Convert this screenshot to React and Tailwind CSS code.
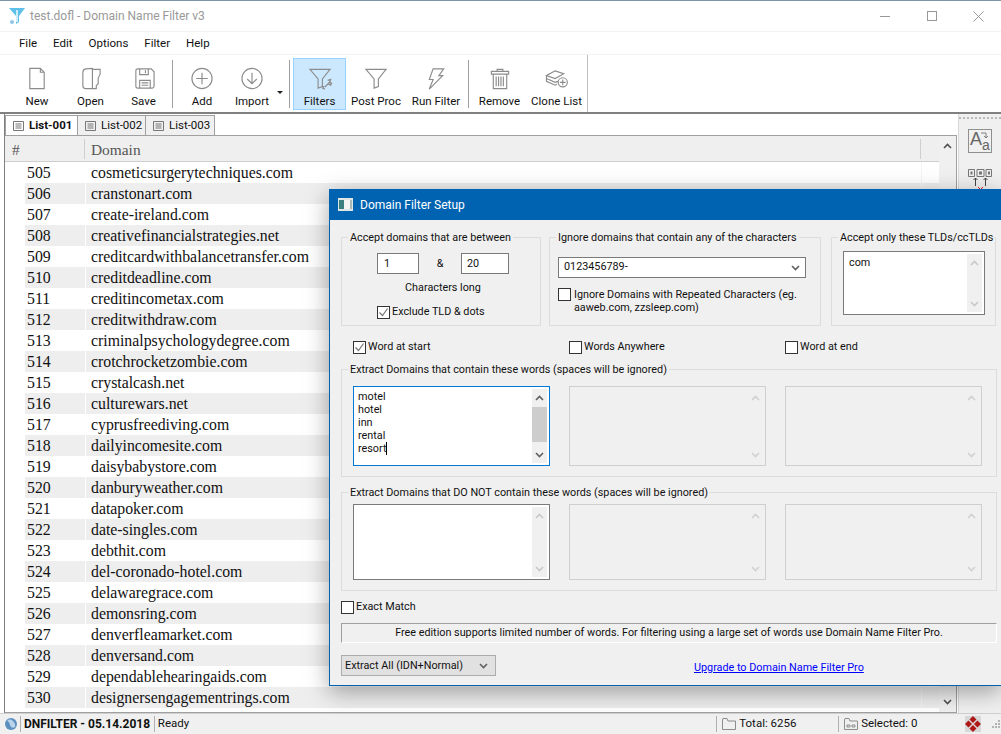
import React from "react";

const domains = [
  "cosmeticsurgerytechniques.com", "cranstonart.com", "create-ireland.com", "creativefinancialstrategies.net",
  "creditcardwithbalancetransfer.com", "creditdeadline.com", "creditincometax.com", "creditwithdraw.com",
  "criminalpsychologydegree.com", "crotchrocketzombie.com", "crystalcash.net", "culturewars.net",
  "cyprusfreediving.com", "dailyincomesite.com", "daisybabystore.com", "danburyweather.com", "datapoker.com",
  "date-singles.com", "debthit.com", "del-coronado-hotel.com", "delawaregrace.com", "demonsring.com",
  "denverfleamarket.com", "denversand.com", "dependablehearingaids.com", "designersengagementrings.com",
];

// Toolbar icons, 30x24 box
const Icon = ({ children }) => (
  <svg width="30" height="24" viewBox="0 0 30 24" fill="none" stroke="#8c8c8c" strokeWidth="1.2">
    {children}
  </svg>
);

const funnel = "M4.500 2.500h21l-8 10v8l-4.500 1.500v-9.500z";

const toolButtons = [
  { label: "New", w: "w-[54px]", icon: <path d="M7.500 1.500h11l4 4v17h-15zM18.500 1.500v4h4" /> },
  { label: "Open", w: "w-[53px]", icon: <path d="M6.500 5.500q0-3 3-3.500l7-.5v21h-7q-3 0-3-3zM16.500 2.500h8v5l-2 4v6l-2 2v3h-4" /> },
  { label: "Save", w: "w-[53px]", icon: <path d="M6.500 4q0-2 2-2h14l3 3v15q0 2-2 2h-15q-2 0-2-2zM10.500 2v6h9V2M16.500 3.500v3M10.500 22v-8h11v8M12.500 16.500h7M12.500 19h7" /> },
];

const ToolButton = ({ label, w, icon, active }) => (
  <div className={`${w} flex flex-col items-center h-[52px] pt-[8px] border ${active ? "bg-[#cce8ff] border-[#99d1ff]" : "border-transparent"}`}>
    <Icon>{icon}</Icon>
    <span className="mt-[3px] leading-[16px] whitespace-nowrap">{label}</span>
  </div>
);

const ToolSep = () => <div className="w-px h-[48px] bg-[#a0a0a0] self-center mx-[2px]" />;

const Check = ({ checked }) => (
  <span className="w-[13px] h-[13px] shrink-0 border border-[#333] bg-white flex items-center justify-center">
    {checked && (
      <svg width="11" height="11" viewBox="0 0 11 11" fill="none" stroke="#777" strokeWidth="1.2">
        <path d="M1.500 5.500l3 3 5-7" />
      </svg>
    )}
  </span>
);

const Chevron = ({ up, color = "#606060", size = 9 }) => (
  <svg width={size} height="6" viewBox="0 0 9 6" fill="none" stroke={color} strokeWidth="1.6">
    <path d={up ? "M1 5l3.500-3.500L8 5" : "M1 1l3.500 3.500L8 1"} />
  </svg>
);

const MiniScroll = ({ color, thumb }) => (
  <div className="absolute right-[2px] top-[2px] bottom-[2px] w-[15px] bg-[#f0f0f0] flex flex-col items-center">
    <div className="h-[17px] flex items-center"><Chevron up color={color} /></div>
    <div className="flex-1 w-full">
      {thumb && <div className="h-[35px] mt-[1px] bg-[#cdcdcd]" />}
    </div>
    <div className="h-[17px] flex items-center"><Chevron color={color} /></div>
  </div>
);

const WordBox = ({ variant, h, children }) => {
  const cls =
    variant === "focus"
      ? "border-[#0078d7] bg-white"
      : variant === "normal"
      ? "border-[#7a7a7a] bg-white"
      : "border-[#cfcfcf] bg-[#f0f0f0]";
  return (
    <div className={`relative w-[197px] ${h} border ${cls} pl-[4px] pt-[3px] leading-[13px]`}>
      {children}
      <MiniScroll color={variant === "disabled" ? "#d0d0d0" : variant === "focus" ? "#606060" : "#c8c8c8"} thumb={variant === "focus"} />
    </div>
  );
};

const Group = ({ title, className, children }) => (
  <fieldset className={`min-w-0 shrink-0 border border-[#dcdcdc] ${className}`}>
    <legend className="ml-[6px] px-[2px] leading-[16px] whitespace-nowrap">
      <span className="block translate-y-[1px]">{title}</span>
    </legend>
    {children}
  </fieldset>
);

const Dialog = () => (
  <div className="absolute left-[329px] top-[189px] w-[672px] h-[497px] bg-[#f0f0f0] border-l border-b border-[#0063b1] shadow-[0_6px_22px_rgba(0,0,0,0.35)] flex flex-col text-[#111]">
    <div className="h-[31px] shrink-0 bg-[#0063b1] flex items-center pl-[8px] text-white text-[12px]">
      <svg width="15" height="13" viewBox="0 0 15 13" className="mr-[7px]">
        <rect width="15" height="13" fill="#dfe6e6" />
        <rect x="1" y="2" width="5" height="9" fill="#3c7f7f" />
        <rect x="6" y="2" width="6" height="9" fill="#f4f4f4" />
        <rect x="12" y="2" width="2" height="9" fill="#a9b9b9" />
      </svg>
      Domain Filter Setup
    </div>

    <div className="flex-1 pl-[11px] pt-[9px] flex flex-col text-[10.8px]">
      {/* Top groups */}
      <div className="flex h-[97px]">
        <Group title="Accept domains that are between" className="w-[200px] h-[97px] mr-[8px]">
          <div className="flex items-center pl-[35px] pt-[8px]">
            <div className="w-[42px] h-[21px] border border-[#7a7a7a] bg-white pl-[6px] leading-[20px]">1</div>
            <span className="w-[42px] text-center leading-[19px]">&amp;</span>
            <div className="w-[48px] h-[21px] border border-[#7a7a7a] bg-white pl-[5px] leading-[20px]">20</div>
          </div>
          <div className="text-center pl-[4px] mt-[6px] leading-[16px]">Characters long</div>
          <div className="flex items-center pl-[35px] mt-[8px] gap-[2px]">
            <Check checked />
            <span>Exclude TLD &amp; dots</span>
          </div>
        </Group>
        <Group title="Ignore domains that contain any of the characters" className="w-[272px] h-[97px] mr-[10px]">
          <div className="ml-[8px] mt-[12px] w-[248px] h-[21px] border border-[#7a7a7a] bg-white pl-[5px] pr-[5px] flex items-center justify-between">
            <span>0123456789-</span>
            <Chevron size={9} />
          </div>
          <div className="flex ml-[8px] mt-[10px] gap-[3px] leading-[13px]">
            <Check />
            <span>Ignore Domains with Repeated Characters (eg.<br />aaweb.com, zzsleep.com)</span>
          </div>
        </Group>
        <Group title="Accept only these TLDs/ccTLDs" className="w-[165px] h-[97px]">
          <div className="relative ml-[11px] mt-[6px] w-[142px] h-[64px] border border-[#7a7a7a] bg-white pl-[5px] pt-[4px] leading-[14px]">
            com
            <MiniScroll color="#c8c8c8" />
          </div>
        </Group>
      </div>

      {/* Word position */}
      <div className="flex mt-[13px] pl-[12px]">
        <label className="w-[216px] flex items-center gap-[2px]"><Check checked />Word at start</label>
        <label className="w-[216px] flex items-center gap-[2px]"><Check />Words Anywhere</label>
        <label className="flex items-center gap-[2px]"><Check />Word at end</label>
      </div>

      <Group title="Extract Domains that contain these words (spaces will be ignored)" className="w-[656px] h-[116px] mt-[6px]">
        <div className="flex gap-[19px] pl-[11px] pt-[9px]">
          <WordBox variant="focus" h="h-[80px]">
            motel<br />hotel<br />inn<br />rental<br />
            <span className="border-r border-black">resort</span>
          </WordBox>
          <WordBox variant="disabled" h="h-[80px]" />
          <WordBox variant="disabled" h="h-[80px]" />
        </div>
      </Group>

      <Group title="Extract Domains that DO NOT contain these words (spaces will be ignored)" className="w-[656px] h-[107px] mt-[7px]">
        <div className="flex gap-[19px] pl-[11px] pt-[4px]">
          <WordBox variant="normal" h="h-[76px]" />
          <WordBox variant="disabled" h="h-[76px]" />
          <WordBox variant="disabled" h="h-[76px]" />
        </div>
      </Group>

      <label className="flex items-center gap-[2px] mt-[9px] h-[14px]"><Check />Exact Match</label>

      <div className="w-[656px] h-[20px] mt-[9px] border border-[#a0a0a0] border-r-white border-b-white text-center leading-[17px]">
        Free edition supports limited number of words. For filtering using a large set of words use Domain Name Filter Pro.
      </div>

      <div className="flex items-center mt-[12px]">
        <div className="w-[155px] h-[21px] bg-[#e1e1e1] border border-[#adadad] pl-[3px] pr-[7px] flex items-center justify-between whitespace-nowrap">
          Extract All (IDN+Normal)
          <Chevron color="#606060" />
        </div>
        <a className="ml-[198px] mt-[4px] text-[#0000ff] underline">Upgrade to Domain Name Filter Pro</a>
      </div>
    </div>
  </div>
);

export default function App() {
  return (
    <div className="relative w-[1001px] h-[734px] overflow-hidden bg-white text-[11.5px] text-[#111] font-['Roboto',sans-serif]">
      {/* Title bar */}
      <div className="h-[31px] border-t border-[#7c93a8] flex items-center text-[#999] text-[12px]">
        <svg width="18" height="18" viewBox="0 0 18 18" className="ml-[8px] mr-[4px]">
          <path d="M1 1h16l-6 8v6l-3 2V9z" fill="#5cc0e8" />
          <path d="M8 3h2v12H8z" fill="#ffffff" opacity="0.7" />
          <circle cx="4" cy="15" r="2" fill="#8fc6e8" />
        </svg>
        test.dofl - Domain Name Filter v3
        <div className="ml-auto flex items-center text-[#8a8a8a]">
          <div className="w-[10px] h-px bg-[#999] mr-[37px]" />
          <div className="w-[10px] h-[10px] border border-[#999] mr-[36px]" />
          <svg width="11" height="11" viewBox="0 0 11 11" stroke="#999" strokeWidth="1" className="mr-[17px]">
            <path d="M0.500 0.500l10 10M10.500 0.500l-10 10" />
          </svg>
        </div>
      </div>

      {/* Menu */}
      <div className="h-[24px] border-t border-b border-[#f2f2f2] flex items-center pl-[19px] gap-[16px] pt-[1px]">
        <span>File</span>
        <span>Edit</span>
        <span>Options</span>
        <span>Filter</span>
        <span>Help</span>
      </div>

      {/* Toolbar */}
      <div className="h-[57px] w-[588px] border-r border-[#c0c0c0] flex items-center pl-[10px]">
        {toolButtons.map((b) => (
          <ToolButton key={b.label} {...b} />
        ))}
        <ToolSep />
        <div className="w-px" />
        <ToolButton label="Add" w="w-[52px]" icon={<><circle cx="15" cy="12" r="10.500" /><path d="M15 6v12M9 12h12" /></>} />
        <ToolButton label="Import" w="w-[48px]" icon={<><circle cx="15" cy="12" r="10.500" /><path d="M15 6v11M10 12.500l5 5 5-5" /></>} />
        <div className="w-0 h-0 mt-[17px] ml-[1px] mr-[4px] border-x-[3px] border-t-[3px] border-x-transparent border-t-[#222]" />
        <ToolSep />
        <div className="w-px" />
        <ToolButton
          label="Filters"
          w="w-[53px]"
          active
          icon={<><path d={funnel} /><path d="M20 21l5-5M23 14l3-1-1 3 2 1-1 2-2-1M19 20l-1 2 2 1" strokeWidth="1.400" /></>}
        />
        <ToolButton label="Post Proc" w="w-[60px]" icon={<path d={funnel} />} />
        <ToolButton label="Run Filter" w="w-[60px]" icon={<path d="M12 2h11l-5 7h4L8 23l4-10H8z" />} />
        <ToolSep />
        <ToolButton
          label="Remove"
          w="w-[57px]"
          icon={<path d="M6 4.500h18v3H6zM12 4.500V2.500h6v2M8 7.500v15h14v-15M11 10v10M13.500 10v10M16 10v10M18.500 10v10" />}
        />
        <ToolButton
          label="Clone List"
          w="w-[57px]"
          icon={<><path d="M4 9l9-5 9 3-9 5zM4 9v3l9 4 3-1M4 12v3l9 4 2-1" /><circle cx="21" cy="16" r="4.800" fill="#fff" /><path d="M21 13v6M18 16h6" /></>}
        />
      </div>

      {/* Main area */}
      <div className="h-[601px] border-t-2 border-[#808080] flex">
        <div className="w-[5px] border-r border-[#808080]" />
        <div className="w-[952px] flex flex-col pr-0">
          {/* Tabs */}
          <div className="h-[22px] shrink-0 flex items-end border-b border-[#a0a0a0]">
            {[
              ["List-001", "w-[73px]", true],
              ["List-002", "w-[69px]", false],
              ["List-003", "w-[70px]", false],
            ].map(([t, w, on]) => (
              <div key={t} className={`${w} h-[20px] flex items-center pl-[7px] gap-[5px] border border-b-0 border-[#a0a0a0] -mr-px whitespace-nowrap ${on ? "bg-white font-bold" : "bg-[#f0f0f0]"}`}>
                <svg width="11" height="10" viewBox="0 0 11 10" fill="none" stroke="#777" strokeWidth="1" className="shrink-0">
                  <path d="M0.500 0.500h10v9h-10zM2.500 3h6M2.500 5h6M2.500 7h6" />
                </svg>
                {t}
              </div>
            ))}
          </div>

          {/* Table */}
          <div className="flex-1 flex min-h-0 border-r border-[#a0a0a0] border-b">
            <div className="flex-1 flex flex-col min-w-0 font-['Liberation_Serif',serif] text-[15.8px]">
              <div className="h-[26px] shrink-0 bg-[#efefef] border-b border-[#cfcfcf] flex items-center text-[#555] text-[15.4px] pt-[1px]">
                <span className="w-[80px] pl-[7px] border-r border-[#cfcfcf] h-[20px] leading-[22px]">#</span>
                <span className="w-[836px] pl-[6px] border-r border-[#cfcfcf] h-[20px] leading-[22px]">Domain</span>
              </div>
              {domains.map((d, i) => (
                <div key={d} className="h-[21px] shrink-0 flex items-center leading-[22px]">
                  <span className="w-[20px] h-full" />
                  <span className={`w-[60px] h-full pl-[2px] ${i % 2 ? "bg-[#eeeeee]" : "bg-white"}`}>{505 + i}</span>
                  <span className="w-px h-full bg-white" />
                  <span className={`w-[835px] h-full pl-[5px] text-[#111] ${i % 2 ? "bg-[#eeeeee]" : "bg-white"}`}>{d}</span>
                  <span className="w-px h-full bg-[#f4f4f4]" />
                  <span className={`flex-1 h-full ${i % 2 ? "bg-[#eeeeee]" : "bg-white"}`} />
                </div>
              ))}
            </div>
            {/* List scrollbar */}
            <div className="w-[17px] bg-[#f0f0f0] flex flex-col items-center justify-between py-[7px]">
              <Chevron up color="#505050" />
              <Chevron color="#505050" />
            </div>
          </div>
        </div>

        {/* Side toolbar */}
        <div className="w-[43px] ml-px bg-[#f0f0f0] border-l border-[#d8d8d8] flex flex-col items-center">
          <div className="w-full h-[4px] mt-[3px] border-t-2 border-dotted border-[#b8b8b8]" />
          <svg width="24" height="24" viewBox="0 0 24 24" fill="none" className="mt-[8px]">
            <rect x="0.500" y="0.500" width="23" height="23" stroke="#909090" />
            <text x="2" y="16" fontSize="18" fill="#666" fontFamily="Liberation Sans">A</text>
            <text x="14" y="21" fontSize="14" fill="#666" fontFamily="Liberation Sans">a</text>
            <path d="M13 4h5v5M16 7l2 2 2-2" stroke="#666" strokeWidth="0.800" />
          </svg>
          <svg width="24" height="22" viewBox="0 0 24 22" fill="none" stroke="#777" className="mt-[16px]">
            <path d="M0.500 0.500h6v7h-6zM9 0.500h7v7H9zM18 0.500h5.500v7H18z" />
            <path d="M2.500 2.500h2v3h-2zM11 2.500h3v3h-3zM20 2.500h2v3h-2z" fill="#777" stroke="none" />
            <path d="M7.500 17V9M5.500 11l2-2 2 2M17.500 17V9M15.500 11l2-2 2 2" stroke="#444" />
            <path d="M10 18l2.500 2.500L15 18" stroke="#e02020" />
          </svg>
        </div>
      </div>

      {/* Status bar */}
      <div className="h-[21px] border-t border-[#d0d0d0] bg-[#f0f0f0] flex items-center">
        <svg width="14" height="14" viewBox="0 0 14 14" className="ml-[4px]">
          <circle cx="7" cy="7" r="6" fill="#5b8fc0" />
          <path d="M3 4q3-3 6 0t2 6q-4 2-5-2T3 4z" fill="#b9d3ea" />
        </svg>
        <div className="w-px h-[16px] bg-[#b0b0b0] ml-[2px]" />
        <span className="ml-[3px] w-[130px] font-bold text-[12px] whitespace-nowrap">DNFILTER - 05.14.2018</span>
        <div className="w-px h-[16px] bg-[#b0b0b0]" />
        <span className="ml-[3px] w-[559px]">Ready</span>
        <div className="w-px h-[16px] bg-[#b0b0b0]" />
        <svg width="14" height="12" viewBox="0 0 14 12" fill="none" stroke="#8c8c8c" className="ml-[5px]">
          <path d="M0.500 2V11.500H13.500V3H6L5 0.500H1z" />
        </svg>
        <span className="ml-[3px] w-[99px]">Total: 6256</span>
        <div className="w-px h-[16px] bg-[#b0b0b0]" />
        <svg width="14" height="12" viewBox="0 0 14 12" fill="none" stroke="#8c8c8c" className="ml-[5px]">
          <path d="M0.500 2V11.500H13.500V3H6L5 0.500H1zM3 7h3v2H3zM8 7h3v2H8z" />
        </svg>
        <span className="ml-[3px] w-[104px]">Selected: 0</span>
        <svg width="16" height="16" viewBox="0 0 16 16">
          <rect width="16" height="16" fill="#d8d8d8" />
          <path d="M8 0l3.500 3.500L8 7 4.500 3.500zM12.500 4.500L16 8l-3.500 3.500L9 8zM3.500 4.500L7 8l-3.500 3.500L0 8zM8 9l3.500 3.500L8 16l-3.500-3.500z" fill="#b01818" />
        </svg>
        <svg width="10" height="10" viewBox="0 0 10 10" fill="#b4b4b4" className="ml-[10px]">
          <rect x="7" y="1" width="2" height="2" /><rect x="4" y="4" width="2" height="2" /><rect x="7" y="4" width="2" height="2" />
          <rect x="1" y="7" width="2" height="2" /><rect x="4" y="7" width="2" height="2" /><rect x="7" y="7" width="2" height="2" />
        </svg>
      </div>

      <Dialog />
    </div>
  );
}
